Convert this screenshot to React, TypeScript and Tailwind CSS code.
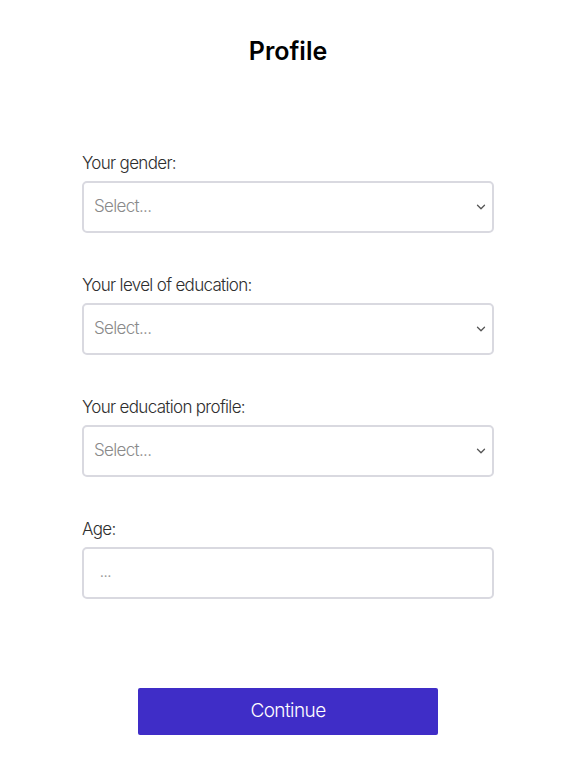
import { ChevronDown } from 'lucide-react'

const fields = [
  { label: 'Your gender:', kind: 'select' },
  { label: 'Your level of education:', kind: 'select' },
  { label: 'Your education profile:', kind: 'select' },
  { label: 'Age:', kind: 'input' },
]

function SelectBox() {
  return (
    <div className="flex h-[52px] w-full items-center justify-between rounded-[5px] border-2 border-[#d9d9e0] bg-white pl-[10px] pr-[4px]">
      <span className="text-[17px] font-light tracking-[-0.04em] text-[#8a8a8a]">Select...</span>
      <ChevronDown className="h-[14px] w-[14px] text-[#555]" strokeWidth={2.2} />
    </div>
  )
}

function AgeInput() {
  return (
    <div className="flex h-[52px] w-full items-center rounded-[5px] border-2 border-[#d9d9e0] bg-white pl-[16px]">
      <span className="text-[13px] text-[#9a9a9a]">...</span>
    </div>
  )
}

export default function App() {
  return (
    <div
      className="flex min-h-[768px] w-full flex-col items-center bg-white pt-[35px]"
      style={{ fontFamily: 'Inter, "Noto Sans", sans-serif' }}
    >
      <h1 className="text-[25px] font-semibold leading-[32px] text-black">Profile</h1>
      <div className="mt-[84px] flex w-[412px] flex-col gap-[40px]">
        {fields.map(f => (
          <div key={f.label} className="flex flex-col">
            <label className="mb-[6px] text-[17px] font-light leading-[24px] tracking-[-0.04em] text-[#2e2e2e]">
              {f.label}
            </label>
            {f.kind === 'select' ? <SelectBox /> : <AgeInput />}
          </div>
        ))}
      </div>
      <button className="mt-[89px] h-[47px] w-[300px] rounded-[2px] bg-[#3f2dc7] text-[19px] font-light tracking-[-0.03em] text-white">
        Continue
      </button>
    </div>
  )
}
